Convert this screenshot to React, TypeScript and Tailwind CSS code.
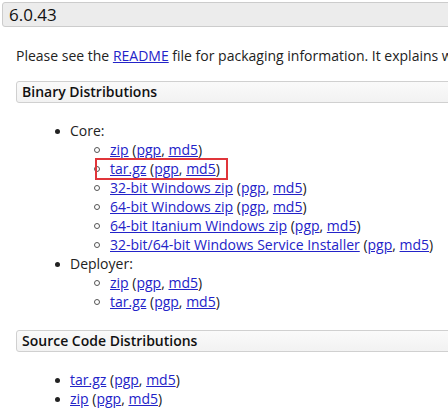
const FONT = { fontFamily: '"Open Sans", "Noto Sans", sans-serif' };

function Links({ name }: { name: string }) {
  return (
    <>
      <a href="#" className="text-[#2323c8] underline">
        {name}
      </a>{' '}
      (<a href="#" className="text-[#2323c8] underline">pgp</a>,{' '}
      <a href="#" className="text-[#2323c8] underline">md5</a>)
    </>
  );
}

function SubItem({ name, highlight = false }: { name: string; highlight?: boolean }) {
  return (
    <li className="relative h-[19px] pl-[40px]">
      <span className="absolute left-[24px] top-[7px] h-[6px] w-[6px] rounded-full border border-[#555]" />
      {highlight ? (
        <span className="absolute left-[25px] top-[-1px] h-[22px] w-[133px] border-2 border-[#e0353a]" />
      ) : null}
      <Links name={name} />
    </li>
  );
}

function Bullet() {
  return <span className="absolute left-[-15px] top-[8px] h-[5px] w-[5px] rounded-full bg-[#222]" />;
}

function SectionTitle({ children }: { children: string }) {
  return (
    <div className="ml-[16px] -mr-4 h-[22px] rounded-[3px] border border-[#d0d0d0] bg-gradient-to-b from-[#fafafa] to-[#f2f2f2] pl-[5px] text-[14px] font-semibold leading-[20px] text-[#111]">
      {children}
    </div>
  );
}

export default function App() {
  return (
    <div className="h-[412px] w-[448px] overflow-hidden bg-white text-[14px] text-[#222]" style={FONT}>
      <div className="pt-[2px] pl-[2px]">
        <div className="-mr-4 h-[25px] rounded-[3px] border border-[#ccc] bg-[#ececec] pl-[6px] text-[17px] leading-[23px] text-[#111]">
          6.0.43
        </div>
      </div>

      <p className="mt-[19px] whitespace-nowrap pl-[16px] leading-[19px]">
        Please see the{' '}
        <a href="#" className="text-[#2323c8] underline">
          README
        </a>{' '}
        file for packaging information. It explains what every distribution contains.
      </p>

      <div className="mt-[16px]">
        <SectionTitle>Binary Distributions</SectionTitle>
      </div>

      <ul className="mt-[18px] pl-[70px] leading-[19px]">
        <li className="relative">
          <Bullet />
          <div className="h-[19px]">Core:</div>
          <ul>
            <SubItem name="zip" />
            <SubItem name="tar.gz" highlight />
            <SubItem name="32-bit Windows zip" />
            <SubItem name="64-bit Windows zip" />
            <SubItem name="64-bit Itanium Windows zip" />
            <SubItem name="32-bit/64-bit Windows Service Installer" />
          </ul>
        </li>
        <li className="relative">
          <Bullet />
          <div className="h-[19px]">Deployer:</div>
          <ul>
            <SubItem name="zip" />
            <SubItem name="tar.gz" />
          </ul>
        </li>
      </ul>

      <div className="mt-[19px]">
        <SectionTitle>Source Code Distributions</SectionTitle>
      </div>

      <ul className="mt-[18px] pl-[70px] leading-[19px]">
        <li className="relative h-[19px]">
          <Bullet />
          <Links name="tar.gz" />
        </li>
        <li className="relative h-[19px]">
          <Bullet />
          <Links name="zip" />
        </li>
      </ul>
    </div>
  );
}
